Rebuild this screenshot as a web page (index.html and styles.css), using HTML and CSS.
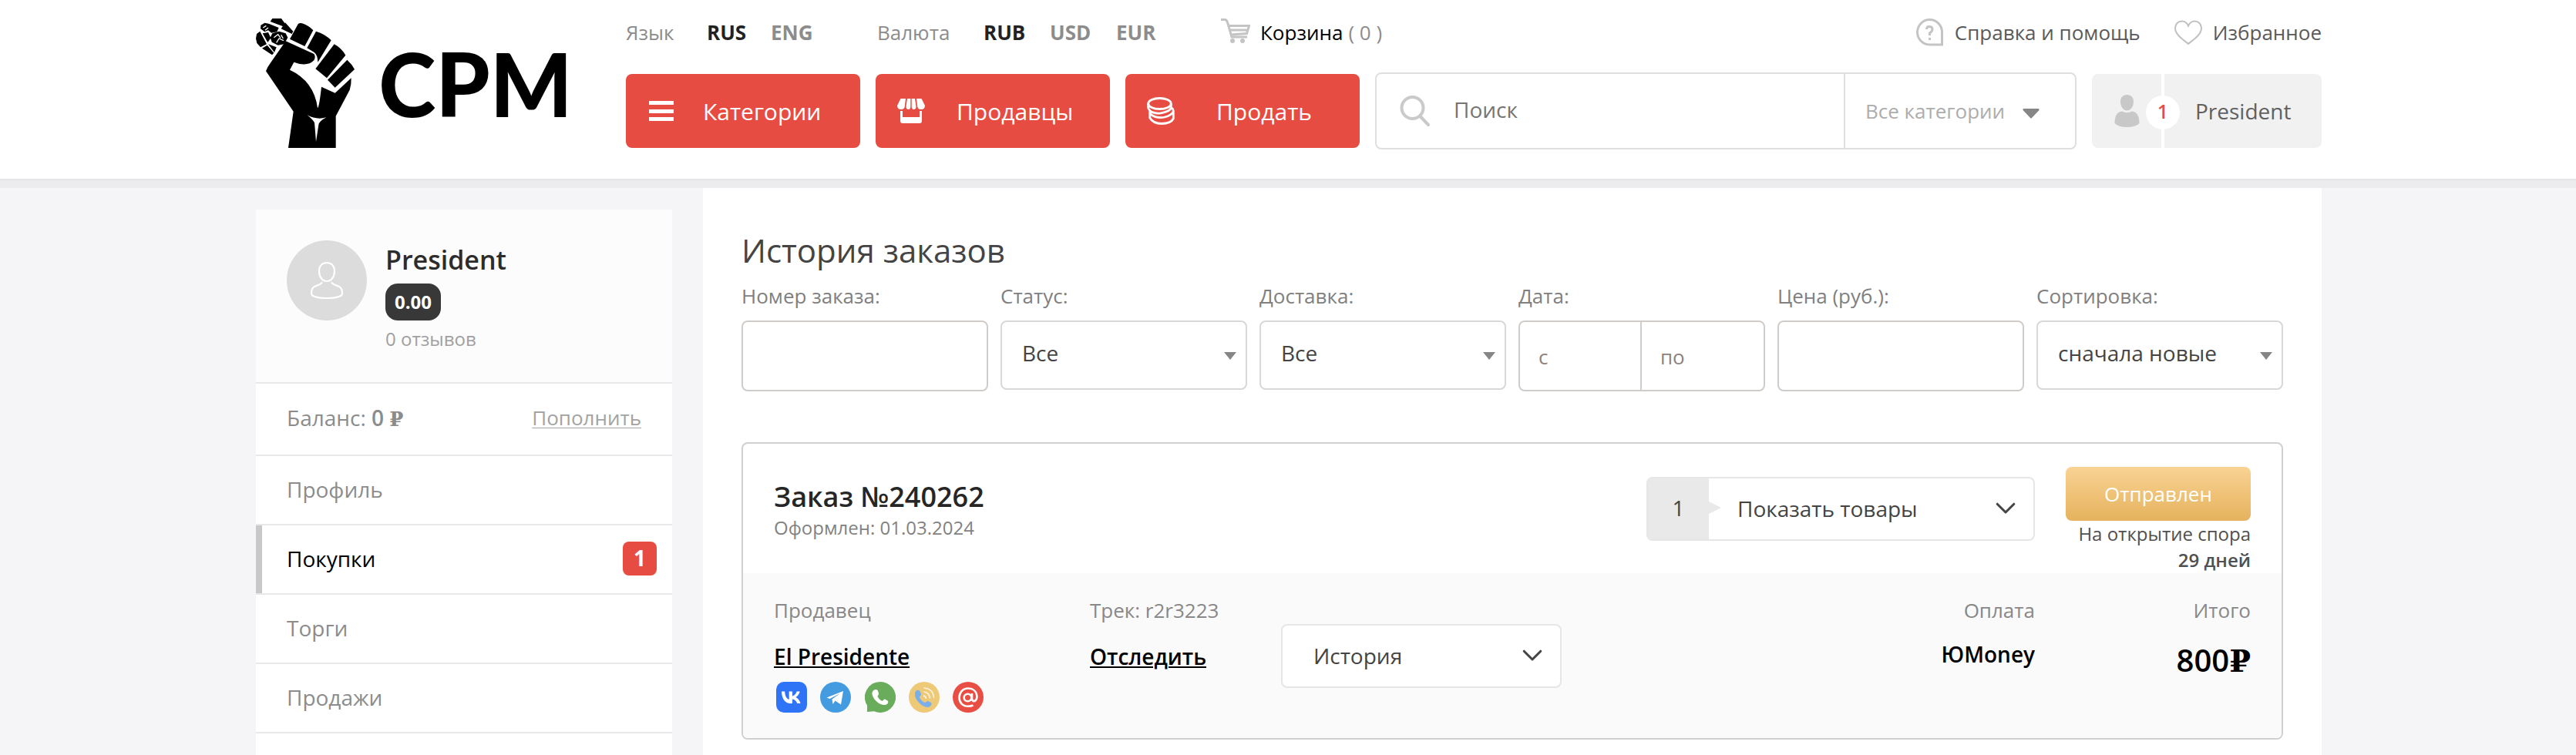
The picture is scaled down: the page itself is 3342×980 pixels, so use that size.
FILE: index.html
```html
<!DOCTYPE html>
<html lang="ru">
<head>
<meta charset="utf-8">
<title>История заказов</title>
<link rel="stylesheet" href="styles.css">
</head>
<body>
<header class="header">
  <div class="container header-in">
    <a class="logo">
      <svg width="432" height="168" viewBox="36 72 1296 504">
        <path d="M100 72L135 72L148 90L142 103L92 84ZM55 98L70 89L86 92L125 108L118 124L96 128L84 118L70 124L54 112ZM150 88L181 122L176 132L134 112ZM39 132L52 122L78 172L54 184L40 168L36 150ZM62 130L84 126L94 148L82 165ZM100 130L126 122L152 130L160 146L146 172L122 176L98 164L92 146ZM84 172L116 184L108 204ZM60 188L80 176L106 206L99 214Z"/>
        <path d="M64 108l12-8M72 118l12-10M106 146l16-12 10 14M116 166l10-16 18 8M134 136l8 14" fill="none" stroke="#fff" stroke-width="4"/>
        <path d="M200 94Q206 88 216 91Q240 98 259 118L226 180L168 152Z"/>
        <path d="M270 122Q305 132 329 157L277 242Q276 212 262 203L235 187Z"/>
        <path d="M341 172Q370 188 385 215L312 304L268 268Z"/>
        <path d="M391 233Q410 250 420 270L344 341L315 311Z"/>
        <path d="M152 160L262 210Q270 222 262 235Q235 262 184 242L168 272Q262 316 276 420Q282 420 291 338L344 362L407 304Q408 330 401 350L347 452V576H162L182 434L75 277Q80 262 92 246Z"/>
        <path d="M236 448Q272 468 310 457Q282 472 280 486L270 552Q266 500 264 478Q258 466 236 448Z" fill="#fff"/>
        <text class="logo-text" x="514" y="456" textLength="754" lengthAdjust="spacingAndGlyphs">CPM</text>
      </svg>
    </a>
    <div class="header-main">
      <div class="topbar">
        <div class="prefs">
          <span>Язык</span><b class="on">RUS</b><b>ENG</b>
          <span>Валюта</span><b class="on">RUB</b><b>USD</b><b>EUR</b>
          <a class="cart">
            <svg width="38" height="32" viewBox="0 0 38 32" fill="none" stroke="#c4c4c4" stroke-width="3"><path d="M0 1.500H5.500Q7.500 2 8.500 5L14 24H34M10 9.500H36.500L33.500 19.500L13 21M11 15H35"/><circle cx="15" cy="29" r="3" fill="#c4c4c4" stroke="none"/><circle cx="28" cy="29" r="3" fill="#c4c4c4" stroke="none"/></svg>
            <span class="cart-name">Корзина</span><span class="cart-count">( 0 )</span>
          </a>
        </div>
        <div class="toplinks">
          <a class="toplink help">
            <svg width="36" height="36" viewBox="0 0 36 36" fill="none" stroke="#c4c4c4" stroke-width="3"><path d="M33.500 34H18A16 16.200 0 1 1 33.500 18Z"/><path d="M13.500 14Q13.500 10.500 17 10.500Q21 10.500 21 14Q21 16.500 17.500 19V22M17.500 25V28"/></svg>
            <span>Справка и помощь</span>
          </a>
          <a class="toplink">
            <svg width="36" height="32" viewBox="0 0 36 32" fill="none" stroke="#c0c0c0" stroke-width="2"><path d="M18 31C14 27 1 20 1 10.500C1 5 5 1.500 9.500 1.500C13.500 1.500 16.500 4 18 7.500C19.500 4 22.500 1.500 26.500 1.500C31 1.500 35 5 35 10.500C35 20 22 27 18 31Z"/></svg>
            <span>Избранное</span>
          </a>
        </div>
      </div>
      <div class="actions">
        <a class="btn btn-categories">
          <svg width="32" height="26" viewBox="0 0 32 26" fill="#fff"><path d="M0 0H32V5H0ZM0 11H32V16H0ZM0 21H32V26H0Z"/></svg>
          <span>Категории</span>
        </a>
        <a class="btn btn-sellers">
          <svg width="36" height="32" viewBox="0 0 36 32" fill="#fff"><path d="M4.500 0H11L9.800 10Q9.500 14 5 14Q0 14 0 9ZM13 0H17.300V10Q17.300 14 14.500 14Q11.500 14 11.500 10ZM18.700 0H23L24.500 10Q24.500 14 21.500 14Q18.700 14 18.700 10ZM25 0H31.500L36 9Q36 14 31 14Q26.500 14 26.200 10ZM4 16H7V24H29V16H32V29Q32 32 29 32H7Q4 32 4 29Z"/></svg>
          <span>Продавцы</span>
        </a>
        <a class="btn btn-sell">
          <svg width="36" height="36" viewBox="0 0 36 36" fill="none" stroke="#fff" stroke-width="2.800"><ellipse cx="16.500" cy="8.500" rx="14.800" ry="7"/><path d="M1.700 8.500V14C3 19.500 11 22 18 20.800C25 20 31.300 17 31.300 13V9M3.800 18V20C6 26 16 27.500 23 26C29 24.500 34.300 21 34.300 18Q34 15 32 14M3.800 19V27Q8 34.500 19 34.500Q31 34.300 34.300 28V18"/></svg>
          <span>Продать</span>
        </a>
        <div class="search">
          <div class="search-field">
            <svg width="40" height="40" viewBox="0 0 40 40" fill="none" stroke="#cacaca" stroke-width="4"><circle cx="16.500" cy="16" r="14"/><path d="M26.500 27L37 38" stroke-linecap="round"/></svg>
            <span>Поиск</span>
          </div>
          <div class="search-cat"><span>Все категории</span><svg width="22" height="13" viewBox="0 0 22 13"><path d="M1.500 0H20.500Q22.500 0.500 21 2.500L12 12Q11 13 10 12L1 2.500Q-0.500 0.500 1.500 0Z" fill="#868686"/></svg></div>
        </div>
        <div class="user">
          <div class="user-icon"><svg width="33" height="42" viewBox="0 0 33 42" fill="#c8c8c8"><path d="M16.500 0C22 0 25 3.500 25 9C25 15 21.500 20.500 16.500 20.500C11.500 20.500 8 15 8 9C8 3.500 11 0 16.500 0ZM10 21.500Q16.500 25 23 21.500C29 22 32.500 27 32.500 37Q28 42 16.500 42Q5 42 0.500 37C0.500 27 4 22 10 21.500Z"/></svg></div>
          <div class="user-name">President</div>
          <div class="user-count">1</div>
        </div>
      </div>
    </div>
  </div>
</header>
<div class="container page">
  <aside class="sidebar">
    <div class="profile">
      <div class="avatar"><svg width="42" height="48" viewBox="0 0 42 48" fill="none" stroke="#fff" stroke-width="2.200" stroke-linecap="round"><path d="M21 1.200C27 1.200 31 5 31 12C31 19 27 25 21 25C15 25 11 19 11 12C11 5 15 1.200 21 1.200ZM14.500 27C12 31 4 30 2 35C1 38 1 42 2 43.500Q8 47 21 47Q34 47 40 43.500C41 42 41 38 40 35C38 30 30 31 27.500 27"/></svg></div>
      <div class="profile-info">
        <div class="profile-name">President</div>
        <div class="rating">0.00</div>
        <div class="reviews">0 отзывов</div>
      </div>
    </div>
    <div class="balance"><span>Баланс: <span class="amount">0 <span class="rub">₽</span></span></span><a class="topup">Пополнить</a></div>
    <nav class="menu">
      <a class="menu-item">Профиль</a>
      <a class="menu-item active"><span>Покупки</span><span class="menu-badge">1</span></a>
      <a class="menu-item">Торги</a>
      <a class="menu-item">Продажи</a>
    </nav>
  </aside>
  <main class="main">
    <h1 class="title">История заказов</h1>
    <div class="filters">
      <div class="filter"><label>Номер заказа:</label><div class="input"></div></div>
      <div class="filter"><label>Статус:</label><div class="select">Все</div></div>
      <div class="filter"><label>Доставка:</label><div class="select">Все</div></div>
      <div class="filter"><label>Дата:</label><div class="input range"><span>с</span><span>по</span></div></div>
      <div class="filter"><label>Цена (руб.):</label><div class="input"></div></div>
      <div class="filter"><label>Сортировка:</label><div class="select">сначала новые</div></div>
    </div>
    <section class="order">
      <div class="order-head">
        <div class="order-id">
          <div class="order-number">Заказ №240262</div>
          <div class="order-date">Оформлен: 01.03.2024</div>
        </div>
        <div class="dropdown goods">
          <span class="goods-count">1</span>
          <span class="dropdown-label">Показать товары</span>
          <svg class="chevron" width="26" height="16" viewBox="0 0 26 16"><path d="M2.200 2.200L13 13L23.800 2.200"/></svg>
        </div>
        <div class="order-state">
          <div class="status">Отправлен</div>
          <div class="dispute">На открытие спора<br><b>29 дней</b></div>
        </div>
      </div>
      <div class="order-body">
        <div class="col seller">
          <div class="cap">Продавец</div>
          <a class="link">El Presidente</a>
          <div class="contacts">
            <svg width="40" height="40" viewBox="0 0 40 40"><rect width="40" height="40" rx="10" fill="#2f74f7"/><path d="M7 12.500h4.200c.2 7 3 9.800 5.500 10.400V12.500h4.200v6c2.400-.3 4.900-3 5.800-6h4c-.7 3.700-3.400 6.500-5.400 7.600 2 1 5.100 3.400 6.300 8h-4.300c-1-3-3.400-5.200-6.400-5.500v5.500C12 29 7.200 22.500 7 12.500z" fill="#fff"/></svg>
            <svg width="40" height="40" viewBox="0 0 40 40"><circle cx="20" cy="20" r="20" fill="#459be0"/><path d="M8.500 20.500L30 12L27 29.500L19.500 24.500L16.500 29L15.500 22.500L26 15L12.500 22Z" fill="#fff"/></svg>
            <svg width="40" height="40" viewBox="0 0 40 40"><path d="M20 0A20 20 0 1 1 12 38.300L3 39L3 30.500A20 20 0 0 1 20 0Z" fill="#68ac5c"/><path d="M12.500 10.500C14.500 9.500 16 10 17 12L18 15C18.500 16.500 16.500 18 16.500 19C18 22 20 24 22.500 25C24 24 24.500 22.500 26 22.500L29.500 24.500C31.500 26 29.500 30 26 30C17 30.500 8.500 19.500 9.500 14C10 12 11 11 12.500 10.500Z" fill="#fff"/></svg>
            <svg width="40" height="40" viewBox="0 0 40 40"><circle cx="20" cy="20" r="20" fill="#eeca78"/><path d="M9 12C11 10 13.500 10.500 15 13L16 16C16.500 18 14 18.500 14 20C15.500 23.500 18 26 21 27C22.500 26.500 23.500 24.500 25 25L29 27C31 29.500 27.500 33 24.500 33C15.500 32.500 4.500 20 9 12Z" fill="#7aafea"/><path d="M19 18Q22 18.500 22.500 22M19.500 13Q27 14 27.500 21.500M19.500 8Q32 9 32.500 21" fill="none" stroke="#fff" stroke-opacity="0.800" stroke-width="1.500"/></svg>
            <svg width="40" height="40" viewBox="0 0 40 40"><circle cx="20" cy="20" r="20" fill="#e84e43"/><g fill="none" stroke="#fff" stroke-width="2.600"><circle cx="19.500" cy="20.500" r="4.800"/><path d="M25 15V22.500Q25.500 25.500 28.500 25Q31.500 23.500 31.500 19C31 12 26 8.500 20 8.500C13 8.500 8.500 14 8.500 20.500C8.500 27 13 31.800 20 31.800Q24 31.800 26.500 30.500"/></g></svg>
          </div>
        </div>
        <div class="col track">
          <div class="cap">Трек: r2r3223</div>
          <a class="link">Отследить</a>
        </div>
        <div class="dropdown history">
          <span class="dropdown-label">История</span>
          <svg class="chevron" width="26" height="16" viewBox="0 0 26 16"><path d="M2.200 2.200L13 13L23.800 2.200"/></svg>
        </div>
        <div class="col payment">
          <div class="cap">Оплата</div>
          <div class="method">ЮMoney</div>
        </div>
        <div class="col total">
          <div class="cap">Итого</div>
          <div class="sum">800<span class="rub">₽</span></div>
        </div>
      </div>
    </section>
  </main>
</div>
</body>
</html>
```
FILE: styles.css
```css
* { box-sizing: border-box; }
body {
  margin: 0;
  background: #f5f5f8;
  font-family: "Open Sans", "Noto Sans", sans-serif;
  font-size: 26px;
  color: #444;
}
svg { display: block; flex: none; }
.container { width: 2680px; margin-left: 332px; }

/* Header */
.header { height: 244px; background: #fff; border-bottom: 10px solid #ececee; box-shadow: inset 0 -2px #e5e5e6; }
.header-in { display: flex; }
.logo { width: 480px; padding-top: 24px; }
.logo-text { font: 900 342px Lato, sans-serif; }
.header-main { flex: 1; }
.topbar { display: flex; justify-content: space-between; height: 84px; line-height: 84px; }
.prefs { display: grid; grid-template-columns: 105px 83px 138px 138px 86px 86px 136px 250px; color: #8c8c8c; }
.prefs .on { color: #222; }
.cart { display: flex; align-items: center; white-space: pre; }
.cart svg { margin-top: -4px; }
.cart-name { color: #000; margin-left: 13px; }
.cart-count { margin-left: 7px; }
.toplinks { display: flex; color: #5a5a5a; }
.toplink { display: flex; align-items: center; gap: 14px; }
.toplink.help { margin-right: 44px; }
.actions { display: flex; align-items: center; gap: 20px; height: 100px; margin-top: 10px; }
.btn {
  display: flex; align-items: center; width: 304px; height: 96px;
  border-radius: 8px; background: #e74c42; color: #fff; font-size: 30px;
}
.btn-categories { padding-left: 30px; }
.btn-categories span { margin-left: 38px; }
.btn-sellers { padding-left: 28px; }
.btn-sellers span { margin-left: 41px; }
.btn-sell { padding-left: 28px; }
.btn-sell span { margin-left: 54px; }
.search { display: flex; width: 910px; height: 100px; border: 2px solid #dfdfdf; border-radius: 8px; }
.search-field { display: flex; align-items: center; width: 608px; padding-left: 30px; border-right: 2px solid #dfdfdf; font-size: 28px; color: #757575; }
.search-field span { margin: -4px 0 0 30px; }
.search-cat { display: flex; align-items: center; padding-left: 26px; color: #adadad; }
.search-cat svg { margin: 6px 0 0 23px; }
.user { position: relative; display: flex; align-items: center; gap: 4px; width: 298px; height: 96px; font-size: 28px; color: #606060; }
.user-icon { display: flex; align-items: center; width: 90px; height: 96px; padding-left: 29px; background: #f1f1f1; border-radius: 8px 0 0 8px; }
.user-name { flex: 1; height: 96px; line-height: 96px; padding-left: 40px; background: #f1f1f1; border-radius: 0 8px 8px 0; }
.user-count {
  position: absolute; left: 70px; top: 28px; width: 44px; height: 44px; border-radius: 50%;
  background: #fff; color: #e74c42; font-weight: 600; font-size: 25px; line-height: 40px; text-align: center;
}

/* Page */
.page { display: flex; justify-content: space-between; height: 736px; }
.sidebar { width: 540px; margin-top: 28px; background: #fff; color: #8c8c8c; }
.profile { display: flex; height: 226px; padding: 40px; gap: 24px; background: #fcfcfc; border-bottom: 2px solid #e8e8e8; }
.avatar { display: flex; align-items: center; justify-content: center; width: 104px; height: 104px; border-radius: 50%; background: #dcdcdc; }
.profile-name { height: 50px; line-height: 50px; font-size: 34px; font-weight: 600; color: #2c2c2c; }
.rating { width: 72px; height: 48px; margin-top: 6px; border-radius: 16px; background: #383838; color: #fff; font-size: 24px; font-weight: 700; line-height: 48px; text-align: center; }
.reviews { height: 48px; line-height: 48px; font-size: 24px; color: #a0a0a0; }
.balance { display: flex; justify-content: space-between; height: 94px; padding: 0 40px; border-bottom: 2px solid #e8e8e8; font-size: 28px; line-height: 88px; }
.amount { font-weight: 600; }
.rub { font-family: "DejaVu Serif", serif; }
.amount .rub { font-size: 26px; }
.topup { font-size: 26px; color: #a3a3a3; text-decoration: underline; text-underline-offset: 3px; text-decoration-thickness: 1px; }
.menu-item { display: flex; align-items: center; justify-content: space-between; height: 90px; padding: 0 20px 2px 40px; border-bottom: 2px solid #e8e8e8; font-size: 28px; }
.menu-item.active { color: #000; box-shadow: inset 8px 0 #c8c8c8; }
.menu-badge { width: 44px; height: 44px; border-radius: 8px; background: #e74c42; color: #fff; font-weight: 700; line-height: 42px; text-align: center; }

.main { width: 2100px; padding: 50px 50px 0; background: #fff; }
.title { margin: 0; height: 62px; line-height: 62px; font-size: 42px; font-weight: 400; }
.filters { display: grid; grid-template-columns: repeat(6, 320px); gap: 16px; }
.filter label { display: block; height: 60px; line-height: 56px; color: #808080; }
.input { height: 92px; border: 2px solid #d0ccc9; border-radius: 8px; }
.select { position: relative; height: 90px; padding-left: 26px; border: 2px solid #d8d8d8; border-radius: 8px; font-size: 28px; line-height: 80px; }
.select::after { content: ""; position: absolute; right: 12px; top: 39px; border: 8px solid transparent; border-top: 10px solid #868686; border-bottom: 0; }
.range { display: flex; color: #8f8279; line-height: 90px; }
.range span { flex: 1; padding-left: 24px; }
.range span:first-child { flex: 0 0 158px; border-right: 2px solid #d0ccc9; }

/* Order */
.order { margin-top: 66px; height: 386px; border: 2px solid #d0d0d0; border-radius: 8px; overflow: hidden; }
.order-head { display: flex; height: 168px; padding: 0 40px; align-items: flex-start; }
.order-id { flex: 1; padding-top: 44px; }
.order-number { height: 49px; line-height: 50px; font-size: 36px; font-weight: 600; color: #262626; }
.order-date { height: 32px; line-height: 32px; font-size: 24px; color: #828282; }
.dropdown { position: relative; display: flex; align-items: center; height: 83px; border: 2px solid #e6e6e6; border-radius: 8px; background: #fff; font-size: 28px; }
.dropdown-label { flex: 1; margin-top: -1px; }
.chevron { fill: none; stroke: #444; stroke-width: 3; stroke-linecap: round; stroke-linejoin: round; margin: 0 23px 2px 0; }
.goods { width: 504px; margin-top: 43px; }
.goods-count { position: relative; width: 79px; height: 79px; margin-right: 37px; background: #e9e9e9; line-height: 77px; text-align: center; }
.goods-count::after { content: ""; position: absolute; left: 79px; top: 30px; border: 8px solid transparent; border-left: 16px solid #e9e9e9; border-right: 0; }
.order-state { width: 240px; margin-left: 40px; padding-top: 30px; text-align: right; }
.status { height: 70px; border-radius: 8px; background: linear-gradient(#f9d293, #e5b35e); color: #fff; line-height: 70px; text-align: center; }
.dispute { font-size: 24px; line-height: 34px; color: #505050; white-space: nowrap; }
.dispute b { font-weight: 600; }
.order-body { display: flex; height: 214px; padding: 0 40px; background: #fafafa; }
.cap { height: 40px; margin-top: 28px; line-height: 40px; color: #888; }
.link { display: inline-block; margin-top: 18px; line-height: 44px; font-size: 28px; font-weight: 600; color: #000; text-decoration: underline; text-decoration-thickness: 2px; text-underline-offset: 2px; white-space: nowrap; }
.seller { width: 410px; }
.contacts { display: flex; gap: 17.250px; margin: 11px 0 0 3px; }
.track { width: 248px; }
.history { width: 364px; margin-top: 66px; padding-left: 40px; }
.payment { margin-left: auto; text-align: right; }
.method { margin-top: 17px; line-height: 40px; font-size: 28px; font-weight: 600; color: #000; }
.total { width: 280px; text-align: right; }
.sum { margin-top: 17px; line-height: 56px; font-size: 40px; font-weight: 600; color: #000; }
```
